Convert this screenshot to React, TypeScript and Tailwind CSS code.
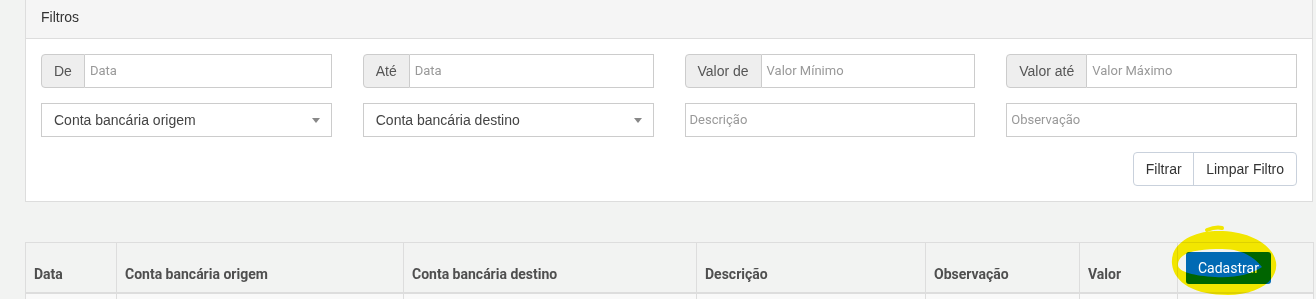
import React from "react";

function Addon({ label, placeholder }: { label: string; placeholder: string }) {
  return (
    <div className="flex h-[34px]">
      <div className="flex items-center px-[12px] bg-[#eeeeee] border border-[#cccccc] rounded-l-[4px] text-[14px] text-[#555555] font-['Liberation_Sans',Arial,sans-serif] whitespace-nowrap">
        {label}
      </div>
      <div className="flex-1 flex items-center pl-[5px] border border-l-0 border-[#cccccc] bg-white text-[13px] text-[#999999] font-['Roboto',sans-serif]">
        {placeholder}
      </div>
    </div>
  );
}

function Select({ label }: { label: string }) {
  return (
    <div className="flex h-[34px] items-center justify-between pl-[12px] pr-[11px] border border-[#cccccc] bg-white text-[14px] text-[#444444] font-['Liberation_Sans',Arial,sans-serif]">
      <span>{label}</span>
      <span className="w-0 h-0 border-l-[4px] border-r-[4px] border-t-[5px] border-l-transparent border-r-transparent border-t-[#888888]" />
    </div>
  );
}

function Plain({ placeholder }: { placeholder: string }) {
  return (
    <div className="flex h-[34px] items-center pl-[4px] border border-[#cccccc] bg-white text-[13px] text-[#999999] font-['Roboto',sans-serif]">
      {placeholder}
    </div>
  );
}

export default function App() {
  const cols = [91, 287, 293, 229, 154, 98, 136];
  const heads = [
    "Data",
    "Conta bancária origem",
    "Conta bancária destino",
    "Descrição",
    "Observação",
    "Valor",
  ];
  return (
    <div className="relative w-[1316px] h-[299px] overflow-hidden bg-[#f2f3f2]">
      <div className="pl-[25px] pr-[3px]">
        {/* Card */}
        <div className="border-l border-r border-b border-[#dddddd] bg-white">
          <div className="h-[39px] flex items-center pl-[15px] pb-[4px] bg-[#f5f5f5] border-b border-[#dddddd] text-[14px] text-[#333333] font-['Liberation_Sans',Arial,sans-serif]">
            Filtros
          </div>
          <div className="px-[15px] pt-[15px] pb-[15px]">
            <div className="grid grid-cols-4 gap-x-[31px] gap-y-[15px]">
              <Addon label="De" placeholder="Data" />
              <Addon label="Até" placeholder="Data" />
              <Addon label="Valor de" placeholder="Valor Mínimo" />
              <Addon label="Valor até" placeholder="Valor Máximo" />
              <Select label="Conta bancária origem" />
              <Select label="Conta bancária destino" />
              <Plain placeholder="Descrição" />
              <Plain placeholder="Observação" />
            </div>
            <div className="flex justify-end mt-[15px]">
              <div className="flex h-[34px] border border-[#c9d1dc] rounded-[4px] bg-white text-[14px] text-[#333333] font-['Liberation_Sans',Arial,sans-serif]">
                <div className="flex items-center px-[12px] w-[60px] justify-center border-r border-[#c9d1dc]">Filtrar</div>
                <div className="flex items-center px-[12px]">Limpar Filtro</div>
              </div>
            </div>
          </div>
        </div>

        {/* Table */}
        <table className="mt-[40px] w-full table-fixed border-collapse font-['Roboto',sans-serif]">
          <colgroup>
            {cols.map((w, i) => (
              <col key={i} style={{ width: w }} />
            ))}
          </colgroup>
          <thead>
            <tr>
              {heads.map((h) => (
                <th
                  key={h}
                  className="border border-[#dddddd] border-b-2 align-bottom text-left pl-[8px] pr-[8px] pb-[8px] pt-[8px] text-[14px] leading-[20px] font-bold text-[#4f4f4f]"
                >
                  {h}
                </th>
              ))}
              <th className="border border-[#dddddd] border-b-2 text-left pl-[8px] pt-[9px] pb-[8px] align-middle">
                <div className="inline-flex items-center h-[32px] px-[12px] rounded-[3px] bg-[#006ab4] text-white text-[14px] font-normal">
                  Cadastrar
                </div>
              </th>
            </tr>
          </thead>
          <tbody>
            <tr>
              {cols.map((_, i) => (
                <td key={i} className="border border-[#dddddd] h-[36px] bg-[#f9f9f9]" />
              ))}
            </tr>
          </tbody>
        </table>
      </div>

      {/* Yellow highlighter annotation */}
      <svg
        className="absolute left-0 top-0 pointer-events-none mix-blend-multiply"
        width="1316"
        height="299"
        viewBox="0 0 1316 299"
      >
        <path
          fillRule="evenodd"
          fill="#fff200"
          d="M1172,264 C1170,245 1190,232 1215,231 C1245,230 1272,242 1276,262 C1279,282 1255,295 1228,295 C1195,295 1174,283 1172,264 Z M1178,265 C1178,252 1198,249 1222,249 C1242,249 1254,257 1262,267 C1250,275 1235,278 1215,277 C1195,276 1178,272 1178,265 Z"
        />
        <path
          d="M1207,230 C1212,228 1217,227 1222,228"
          stroke="#fff200"
          strokeWidth="4"
          strokeLinecap="round"
          fill="none"
        />
      </svg>
    </div>
  );
}
